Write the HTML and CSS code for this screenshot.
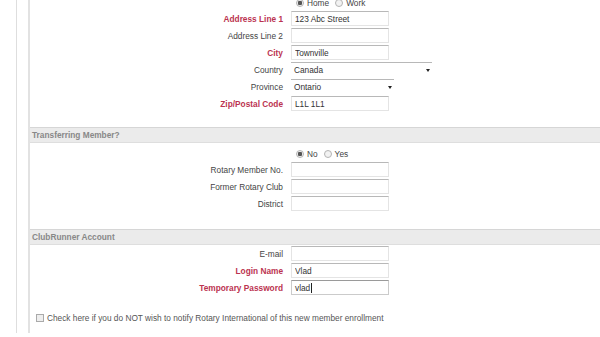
FILE: index.html
```html
<!DOCTYPE html>
<html lang="en">
<head>
    <meta charset="utf-8">
    <title>New Member</title>
    <link rel="stylesheet" href="styles.css">
</head>
<body>
    <div class="page">
        <div class="panel">
            <div class="section first">
                <div class="row radio">
                    <span class="lbl"></span>
                    <div class="choices">
                        <label><input type="radio" name="addrtype" checked> Home</label>
                        <label><input type="radio" name="addrtype"> Work</label>
                    </div>
                </div>
                <div class="row">
                    <label class="lbl req" for="addr1">Address Line 1</label>
                    <input class="io" id="addr1" type="text" value="123 Abc Street">
                </div>
                <div class="row">
                    <label class="lbl" for="addr2">Address Line 2</label>
                    <input class="io" id="addr2" type="text">
                </div>
                <div class="row">
                    <label class="lbl req" for="city">City</label>
                    <input class="io" id="city" type="text" value="Townville">
                </div>
                <div class="row">
                    <label class="lbl" for="country">Country</label>
                    <div class="sel wide" id="country">Canada<span class="arrow"></span></div>
                </div>
                <div class="row">
                    <label class="lbl" for="province">Province</label>
                    <div class="sel" id="province">Ontario<span class="arrow"></span></div>
                </div>
                <div class="row">
                    <label class="lbl req" for="zip">Zip/Postal Code</label>
                    <input class="io" id="zip" type="text" value="L1L 1L1">
                </div>
            </div>

            <div class="sec-head">Transferring Member?</div>
            <div class="section transfer">
                <div class="row radio">
                    <span class="lbl"></span>
                    <div class="choices">
                        <label><input type="radio" name="transfer" checked> No</label>
                        <label><input type="radio" name="transfer"> Yes</label>
                    </div>
                </div>
                <div class="row">
                    <label class="lbl" for="memno">Rotary Member No.</label>
                    <input class="io" id="memno" type="text">
                </div>
                <div class="row">
                    <label class="lbl" for="club">Former Rotary Club</label>
                    <input class="io" id="club" type="text">
                </div>
                <div class="row">
                    <label class="lbl" for="district">District</label>
                    <input class="io" id="district" type="text">
                </div>
            </div>

            <div class="sec-head">ClubRunner Account</div>
            <div class="section account">
                <div class="row">
                    <label class="lbl" for="email">E-mail</label>
                    <input class="io" id="email" type="text">
                </div>
                <div class="row">
                    <label class="lbl req" for="login">Login Name</label>
                    <input class="io" id="login" type="text" value="Vlad">
                </div>
                <div class="row">
                    <label class="lbl req" for="pass">Temporary Password</label>
                    <div class="io active" id="pass">vlad<span class="caret"></span></div>
                </div>
            </div>

            <div class="notify">
                <label><input type="checkbox"> Check here if you do NOT wish to notify Rotary International of this new member enrollment</label>
            </div>
        </div>
    </div>
</body>
</html>
```

FILE: styles.css
```css
* {
    margin: 0;
    padding: 0;
    box-sizing: border-box;
}

body {
    background: #fff;
    font-family: "Liberation Sans", Arial, sans-serif;
    font-size: 8.3px;
    color: #444;
    overflow: hidden;
}

.page {
    margin-left: 16px;
    padding-left: 11px;
    border-left: 1px solid #dedede;
    min-height: 100vh;
}

.panel {
    border-left: 2px solid #e2e2e2;
    min-height: 100vh;
}

.section.first {
    margin-top: -4px;
    padding-bottom: 15px;
}

.section.transfer {
    padding: 4px 0 17px;
}

.section.account {
    padding: 0;
}

.row {
    display: grid;
    grid-template-columns: 253px 1fr;
    column-gap: 8px;
    align-items: center;
    height: 17px;
}

.row.radio {
    height: 14px;
}

.lbl {
    text-align: right;
    color: #444;
}

.lbl.req {
    color: #bb3350;
    font-weight: bold;
}

.io {
    width: 98px;
    height: 15px;
    border: 1px solid #e4e4e4;
    border-top-color: #b8b8b8;
    padding: 0 3px;
    font: inherit;
    color: #333;
    background: #fff;
    display: flex;
    align-items: center;
}

.io.active {
    border-color: #cbcbcb;
    border-top-color: #9a9a9a;
}

.caret {
    display: inline-block;
    width: 1px;
    height: 10px;
    background: #222;
    margin-left: 1px;
}

.sel {
    position: relative;
    width: 103px;
    height: 15px;
    border-top: 1px solid #b8b8b8;
    padding: 0 3px;
    color: #333;
    display: flex;
    align-items: center;
}

.sel.wide {
    width: 141px;
}

.arrow {
    position: absolute;
    right: 2px;
    top: 6px;
    border-left: 2.5px solid transparent;
    border-right: 2.5px solid transparent;
    border-top: 3px solid #222;
}

.choices {
    display: flex;
    gap: 6px;
    padding-left: 5px;
    color: #444;
}

.choices label {
    display: flex;
    align-items: center;
    gap: 3px;
}

input[type="radio"] {
    appearance: none;
    width: 8px;
    height: 8px;
    border: 1px solid #b4b4b4;
    border-radius: 50%;
    background: #f2f2f2;
}

input[type="radio"]:checked {
    background: radial-gradient(circle, #555 0 2px, #eee 2.5px);
}

.sec-head {
    height: 16px;
    padding-left: 2px;
    display: flex;
    align-items: center;
    background: #ebebeb;
    border-top: 1px solid #d6d6d6;
    border-bottom: 1px solid #dedede;
    color: #888;
    font-weight: bold;
}

.notify {
    padding: 17px 0 0 6px;
}

.notify label {
    display: flex;
    align-items: center;
    gap: 3px;
    color: #555;
}

input[type="checkbox"] {
    appearance: none;
    width: 8px;
    height: 8px;
    border: 1px solid #aaa;
    background: #eee;
}
```
